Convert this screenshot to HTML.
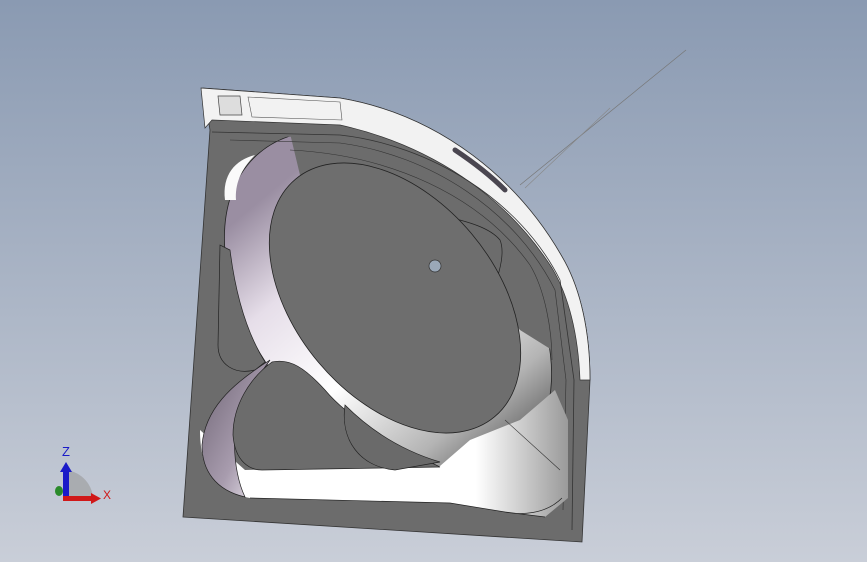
<!DOCTYPE html>
<html><head><meta charset="utf-8"><style>
html,body{margin:0;padding:0;width:867px;height:562px;overflow:hidden}
</style></head><body>
<svg width="867" height="562" viewBox="0 0 867 562" xmlns="http://www.w3.org/2000/svg">
<defs>
<linearGradient id="bg" x1="0" y1="0" x2="0" y2="1">
<stop offset="0" stop-color="#8a9ab2"/><stop offset="1" stop-color="#c9ced8"/>
</linearGradient>
<linearGradient id="ring" gradientUnits="userSpaceOnUse" x1="225" y1="0" x2="575" y2="0">
<stop offset="0" stop-color="#9a8ea2"/><stop offset="0.25" stop-color="#e6dee9"/><stop offset="0.55" stop-color="#ffffff"/><stop offset="0.85" stop-color="#b4b4b4"/><stop offset="1" stop-color="#707070"/>
</linearGradient>
<linearGradient id="purp" x1="0" y1="0" x2="1" y2="1">
<stop offset="0" stop-color="#6e6474"/><stop offset="0.6" stop-color="#a89cae"/><stop offset="1" stop-color="#f4f0f6"/>
</linearGradient>
<linearGradient id="band" x1="0" y1="0" x2="1" y2="0">
<stop offset="0" stop-color="#ffffff"/><stop offset="0.75" stop-color="#ffffff"/><stop offset="1" stop-color="#9a9a9a"/>
</linearGradient>
<clipPath id="inner"><path d="M215,135 L340,138 C430,150 520,205 568,300 L578,380 L574,505 L505,508 L450,503 L250,496 L205,470 L220,140 Z"/></clipPath>
</defs>
<rect width="867" height="562" fill="url(#bg)"/>
<line x1="520" y1="185" x2="686" y2="50" stroke="#777" stroke-width="0.7"/>
<line x1="525" y1="188" x2="610" y2="108" stroke="#888" stroke-width="0.6"/>
<path d="M203,88 L210,130 L183,517 L582,542 L590,380 C590,330 580,290 565,262 C520,180 440,115 340,98 Z" fill="#6c6c6c" stroke="#333" stroke-width="0.8"/>
<g clip-path="url(#inner)">
<ellipse cx="388" cy="306" rx="200" ry="132" transform="rotate(50 388 306)" fill="url(#ring)" stroke="#222" stroke-width="0.8"/>
</g>
<path d="M288,125 L340,125 C430,145 510,195 552,268 C565,300 570,330 568,360 L520,330 L400,180 L300,175 Z" fill="#6c6c6c"/>
<path d="M201,88 L340,98 C440,115 520,180 565,262 C580,290 590,330 590,380 L580,380 C578,330 568,295 552,268 C505,195 430,145 340,125 L212,120 L205,128 Z" fill="#f2f2f2" stroke="#333" stroke-width="0.7"/>
<path d="M218,96 L240,96 L242,115 L220,115 Z" fill="#ddd" stroke="#444" stroke-width="0.7"/>
<path d="M248,97 L340,102 L342,120 L252,117 Z" fill="none" stroke="#555" stroke-width="0.6"/>
<path d="M455,150 C470,160 490,175 505,190" stroke="#4a4650" stroke-width="5" fill="none" stroke-linecap="round"/>
<path d="M212,132 L340,135 C430,145 520,200 560,280 L574,380 L572,530" fill="none" stroke="#333" stroke-width="0.8"/>
<path d="M230,140 L340,143 C430,155 515,210 555,290 L566,380 L563,510" fill="none" stroke="#333" stroke-width="0.6"/>
<path d="M290,150 C390,155 480,195 530,265 C545,290 552,330 552,360" fill="none" stroke="#333" stroke-width="0.6"/>
<path d="M225,200 C222,175 235,160 255,155 C240,170 235,185 236,200 Z" fill="#fafafa"/>
<path d="M200,430 L245,470 L440,466 L470,440 L520,420 L555,390 L568,420 L568,498 L545,517 L505,512 L450,503 L250,498 C215,492 200,470 200,430Z" fill="url(#band)"/>
<path d="M250,498 L450,503 L505,512 L545,517 M562,498 C545,515 520,515 505,512" fill="none" stroke="#222" stroke-width="0.7"/>
<path d="M505,420 L560,470" stroke="#333" stroke-width="0.6"/>
<path d="M270,360 C230,385 205,410 202,445 C202,470 215,490 245,497 C232,470 230,420 245,395 Z" fill="url(#purp)" stroke="#222" stroke-width="0.7"/>
<path d="M272,362 C250,378 233,405 233,435 C235,462 250,470 262,470 L440,467 C395,445 350,420 325,390 C305,368 290,358 272,362Z" fill="#6c6c6c" stroke="#222" stroke-width="0.7"/>
<path d="M345,405 C340,440 360,467 395,470 L440,462 C400,450 370,430 345,405 Z" fill="#6a6a6a" stroke="#222" stroke-width="0.7"/>
<path d="M220,245 L218,345 C218,365 235,375 255,370 L265,362 C245,330 235,290 230,250Z" fill="#6c6c6c" stroke="#222" stroke-width="0.7"/>
<path d="M440,215 C470,222 490,228 500,240 C505,252 500,270 495,285" fill="none" stroke="#222" stroke-width="0.7"/>
<ellipse cx="395" cy="298" rx="155" ry="100" transform="rotate(50 395 298)" fill="#6e6e6e" stroke="#222" stroke-width="0.8"/>
<circle cx="435" cy="266" r="6" fill="#9aa8b8" stroke="#333" stroke-width="0.7"/>
<path d="M63,498 L63,470 A30,30 0 0 1 93,498 Z" fill="#9a9a9a" opacity="0.6"/>
<ellipse cx="59" cy="491" rx="4" ry="5" fill="#2a8a2a"/>
<rect x="63" y="470" width="6" height="29" fill="#1a1ac8"/>
<path d="M60,472 L66,462 L72,472 Z" fill="#1a1ac8"/>
<rect x="63" y="496" width="30" height="5" fill="#d01818"/>
<path d="M91,493 L101,498.5 L91,504 Z" fill="#d01818"/>
<text x="62" y="456" font-family="Liberation Sans, sans-serif" font-size="13" fill="#1a1ac8">Z</text>
<text x="103" y="499" font-family="Liberation Sans, sans-serif" font-size="12" fill="#d01818">X</text>
</svg>
</body></html>
